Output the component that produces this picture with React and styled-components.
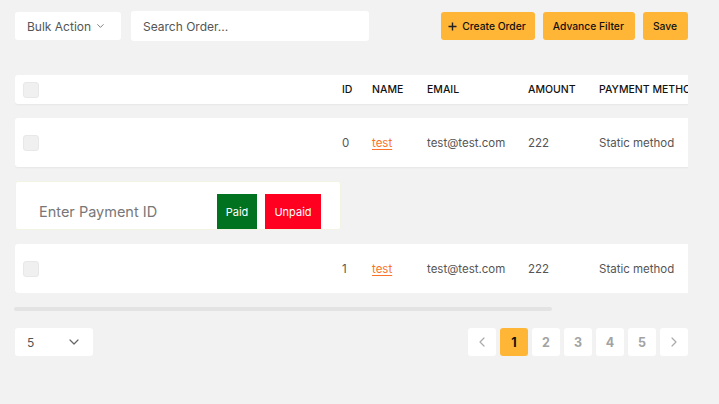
import React from 'react';
import styled, { createGlobalStyle } from 'styled-components';

const GlobalStyle = createGlobalStyle`
  html, body { margin: 0; padding: 0; background: #f2f2f2; }
  body { font-family: Inter, "Noto Sans", sans-serif; }
  * { box-sizing: border-box; }
`

const Page = styled.div`
  width: 719px;
  height: 404px;
  padding: 11px 31px 0 15px;
  overflow: hidden;
`
const Toolbar = styled.div`
  display: flex;
  align-items: center;
  height: 30px;
`
const Select = styled.div`
  display: flex;
  align-items: center;
  justify-content: space-between;
  gap: 6px;
  width: ${({ w }) => w}px;
  height: ${({ h }) => h}px;
  padding: 0 ${({ pr }) => pr}px 0 12px;
  background: #fff;
  border-radius: 3px;
  color: #555;
  font-size: 12px;
  white-space: nowrap;
`
const Search = styled.div`
  display: flex;
  align-items: center;
  margin-left: 10px;
  width: 238px;
  height: 30px;
  padding: 0 12px;
  background: #fff;
  border-radius: 3px;
  color: #555;
  font-size: 12px;
`
const Actions = styled.div`
  display: flex;
  gap: 8px;
  margin-left: auto;
`
const ActionButton = styled.button`
  display: flex;
  align-items: center;
  gap: 5px;
  height: 28px;
  padding: 0 ${({ icon }) => (icon ? 9 : 11)}px 0 ${({ icon }) => (icon ? 7 : 10)}px;
  border: none;
  border-radius: 3px;
  background: #ffb536;
  color: #111;
  font-family: inherit;
  font-size: 10.3px;
  font-weight: 500;
  white-space: nowrap;
`
const TableWrap = styled.div`
  margin-top: 34px;
  width: 673px;
  overflow: hidden;
`
const Rows = styled.div`
  display: flex;
  flex-direction: column;
  gap: 14px;
  width: 842px;
`
const Row = styled.div`
  display: flex;
  align-items: center;
  height: ${({ head }) => (head ? 29 : 49)}px;
  background: #fff;
  border-radius: 3px;
  box-shadow: 0 1px 2px rgba(0, 0, 0, 0.05);
  font-size: ${({ head }) => (head ? 10.5 : 11.5)}px;
  font-weight: ${({ head }) => (head ? 500 : 400)};
  color: ${({ head }) => (head ? '#111' : '#555')};
`
const CheckCell = styled.div`
  width: 327px;
  padding-left: 8px;
`
const Checkbox = styled.div`
  width: 16px;
  height: 16px;
  border-radius: 3px;
  background: #f0f0f0;
  border: 1px solid #e8e8e8;
`
const Cell = styled.div`
  width: ${({ w }) => w}px;
  white-space: nowrap;
`
const Link = styled.a`
  color: #f9732a;
  text-decoration: underline;
  text-underline-offset: 2px;
`
const PaymentBox = styled.div`
  display: flex;
  align-items: stretch;
  width: 326px;
  height: 49px;
  padding-top: 12px;
  background: #fff;
  border: 1px solid #f3f3e3;
  border-radius: 3px;
`
const PaymentInput = styled.div`
  display: flex;
  align-items: center;
  width: 201px;
  padding-left: 23px;
  color: #777;
  font-size: 14.5px;
`
const StatusButton = styled.button`
  width: ${({ w }) => w}px;
  margin-right: 8px;
  border: none;
  background: ${({ bg }) => bg};
  color: #fff;
  font-family: inherit;
  font-size: 11px;
`
const ScrollTrack = styled.div`
  margin-top: 14px;
  width: 673px;
  height: 4px;
`
const ScrollThumb = styled.div`
  height: 4px;
  border-radius: 2px;
  background: #e3e3e3;
  margin-left: -1px;
`
const Footer = styled.div`
  display: flex;
  justify-content: space-between;
  margin-top: 17px;
`
const Pager = styled.div`
  display: flex;
  gap: 4px;
`
const PageButton = styled.div`
  display: flex;
  align-items: center;
  justify-content: center;
  width: 28px;
  height: 28px;
  border-radius: 3px;
  background: ${({ active }) => (active ? '#ffb536' : '#fff')};
  color: ${({ active }) => (active ? '#111' : '#a3a3a3')};
  font-size: 12.5px;
  font-weight: 700;
`

const Chevron = ({ dir = 'down', color = '#666' }) => {
  const d = {
    down: 'M1 1l4 4 4-4',
    left: 'M5 1L1 5l4 4',
    right: 'M1 1l4 4-4 4',
  }[dir]
  const vertical = dir === 'down'
  return (
    <svg width={vertical ? 10 : 6} height={vertical ? 6 : 10} viewBox={vertical ? '0 0 10 6' : '0 0 6 10'}>
      <path d={d} fill="none" stroke={color} strokeWidth="1.2" strokeLinecap="round" strokeLinejoin="round" />
    </svg>
  )
}

const Plus = () => (
  <svg width="9" height="9" viewBox="0 0 9 9">
    <path d="M4.5 0.5v8M0.5 4.5h8" stroke="#222" strokeWidth="1.4" />
  </svg>
)

const orders = [
  { id: 0, name: 'test', email: 'test@test.com', amount: 222, method: 'Static method' },
  { id: 1, name: 'test', email: 'test@test.com', amount: 222, method: 'Static method' },
]

function OrderRow({ order }) {
  return (
    <Row>
      <CheckCell><Checkbox /></CheckCell>
      <Cell w={30}>{order.id}</Cell>
      <Cell w={55}><Link>{order.name}</Link></Cell>
      <Cell w={101}>{order.email}</Cell>
      <Cell w={71}>{order.amount}</Cell>
      <Cell w={150}>{order.method}</Cell>
    </Row>
  )
}

export default function App() {
  const thumb = 538
  return (
    <Page>
      <GlobalStyle />
      <Toolbar>
        <Select w={106} h={28} pr={17}>
          Bulk Action <Chevron />
        </Select>
        <Search>Search Order...</Search>
        <Actions>
          <ActionButton icon><Plus />Create Order</ActionButton>
          <ActionButton>Advance Filter</ActionButton>
          <ActionButton>Save</ActionButton>
        </Actions>
      </Toolbar>

      <TableWrap>
        <Rows>
          <Row head>
            <CheckCell><Checkbox /></CheckCell>
            <Cell w={30}>ID</Cell>
            <Cell w={55}>NAME</Cell>
            <Cell w={101}>EMAIL</Cell>
            <Cell w={71}>AMOUNT</Cell>
            <Cell w={150}>PAYMENT METHOD</Cell>
          </Row>
          <OrderRow order={orders[0]} />
          <PaymentBox>
            <PaymentInput>Enter Payment ID</PaymentInput>
            <StatusButton w={40} bg="#017220">Paid</StatusButton>
            <StatusButton w={56} bg="#ff0020">Unpaid</StatusButton>
          </PaymentBox>
          <OrderRow order={orders[1]} />
        </Rows>
      </TableWrap>
      <ScrollTrack>
        <ScrollThumb style={{ width: thumb }} />
      </ScrollTrack>

      <Footer>
        <Select w={78} h={28} pr={14}>
          5 <Chevron />
        </Select>
        <Pager>
          <PageButton><Chevron dir="left" color="#aaa" /></PageButton>
          {[1, 2, 3, 4, 5].map((n) => (
            <PageButton key={n} active={n === 1}>{n}</PageButton>
          ))}
          <PageButton><Chevron dir="right" color="#aaa" /></PageButton>
        </Pager>
      </Footer>
    </Page>
  )
}
